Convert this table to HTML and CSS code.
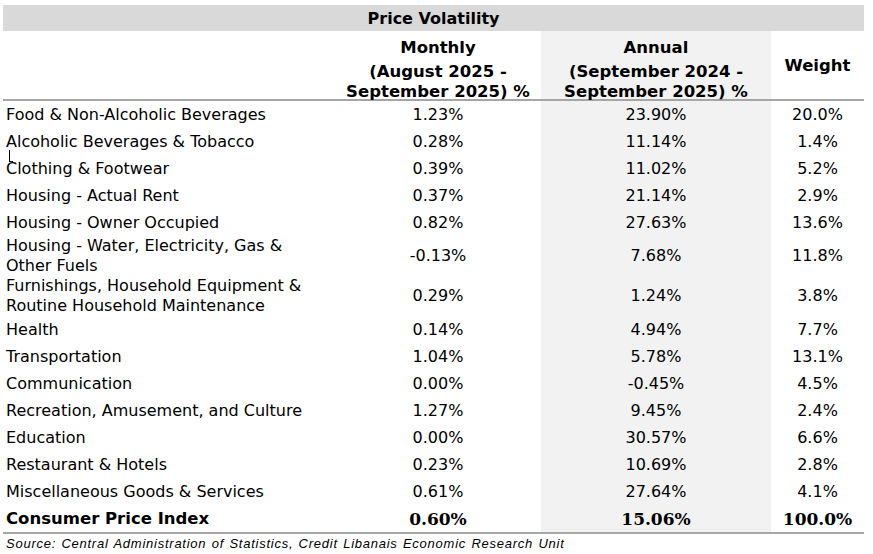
FILE: index.html
```html
<!DOCTYPE html>
<html>
<head>
<meta charset="utf-8">
<link rel="stylesheet" href="styles.css">
</head>
<body>
<div class="wrap">
<table class="vol">
  <colgroup>
    <col class="c-label"><col class="c-month"><col class="c-annual"><col class="c-weight">
  </colgroup>
  <thead>
    <tr class="title-row"><th colspan="4">Price Volatility</th></tr>
    <tr class="head-row">
      <th></th>
      <th class="hcell"><span class="h1">Monthly</span><span class="h2">(August 2025 -</span><span class="h3">September 2025) %</span></th>
      <th class="hcell annual"><span class="h1">Annual</span><span class="h2">(September 2024 -</span><span class="h3">September 2025) %</span></th>
      <th class="hweight">Weight</th>
    </tr>
  </thead>
  <tbody>
    <tr><td>Food &amp; Non-Alcoholic Beverages</td><td>1.23%</td><td class="annual">23.90%</td><td>20.0%</td></tr>
    <tr><td>Alcoholic Beverages &amp; Tobacco</td><td>0.28%</td><td class="annual">11.14%</td><td>1.4%</td></tr>
    <tr><td class="cursor-cell"><span class="caret"></span>Clothing &amp; Footwear</td><td>0.39%</td><td class="annual">11.02%</td><td>5.2%</td></tr>
    <tr><td>Housing - Actual Rent</td><td>0.37%</td><td class="annual">21.14%</td><td>2.9%</td></tr>
    <tr><td>Housing - Owner Occupied</td><td>0.82%</td><td class="annual">27.63%</td><td>13.6%</td></tr>
    <tr class="two"><td>Housing - Water, Electricity, Gas &amp;<br>Other Fuels</td><td>-0.13%</td><td class="annual">7.68%</td><td>11.8%</td></tr>
    <tr class="two"><td>Furnishings, Household Equipment &amp;<br>Routine Household Maintenance</td><td>0.29%</td><td class="annual">1.24%</td><td>3.8%</td></tr>
    <tr><td>Health</td><td>0.14%</td><td class="annual">4.94%</td><td>7.7%</td></tr>
    <tr><td>Transportation</td><td>1.04%</td><td class="annual">5.78%</td><td>13.1%</td></tr>
    <tr><td>Communication</td><td>0.00%</td><td class="annual">-0.45%</td><td>4.5%</td></tr>
    <tr><td>Recreation, Amusement, and Culture</td><td>1.27%</td><td class="annual">9.45%</td><td>2.4%</td></tr>
    <tr><td>Education</td><td>0.00%</td><td class="annual">30.57%</td><td>6.6%</td></tr>
    <tr><td>Restaurant &amp; Hotels</td><td>0.23%</td><td class="annual">10.69%</td><td>2.8%</td></tr>
    <tr><td>Miscellaneous Goods &amp; Services</td><td>0.61%</td><td class="annual">27.64%</td><td>4.1%</td></tr>
    <tr class="total"><td>Consumer Price Index</td><td class="num-bold">0.60%</td><td class="annual num-bold">15.06%</td><td class="num-bold">100.0%</td></tr>
  </tbody>
</table>
<p class="source">Source:  Central Administration of Statistics, Credit Libanais Economic Research Unit</p>
</div>
</body>
</html>
```

FILE: styles.css
```css
html, body {
  margin: 0;
  padding: 0;
  background: #ffffff;
}

.wrap {
  padding: 5px 0 0 3px;
}

.vol {
  border-collapse: collapse;
  table-layout: fixed;
  width: 861px;
  font-family: "DejaVu Sans", Verdana, sans-serif;
  font-size: 16px;
  color: #000000;
}

.c-label { width: 332px; }
.c-month { width: 206px; }
.c-annual { width: 230px; }
.c-weight { width: 93px; }

.title-row th {
  background: #d9d9d9;
  height: 26px;
  padding: 0;
  font-size: 16px;
  font-weight: bold;
  text-align: center;
  vertical-align: middle;
}

.head-row th {
  height: 68px;
  padding: 0;
  font-size: 16.5px;
  font-weight: bold;
  border-bottom: 2px solid #a6a6a6;
  vertical-align: middle;
}

.head-row th.hcell {
  vertical-align: bottom;
}

.hcell span {
  display: block;
  line-height: 20px;
  text-align: center;
  white-space: nowrap;
}

.hcell .h1 {
  margin-bottom: 4px;
}

.hcell .h2 {
  margin-bottom: 3px;
}

.hcell .h3 {
  line-height: 14px;
}

.hweight {
  text-align: center;
}

.annual {
  background: #f2f2f2;
}

.vol td {
  height: 27px;
  padding: 0;
  text-align: center;
  vertical-align: middle;
  white-space: nowrap;
  line-height: 20px;
}

.vol td:first-child {
  text-align: left;
  padding-left: 3px;
}

.vol tr.two td {
  height: 40px;
}

.total td {
  font-weight: bold;
  font-size: 16.5px;
  border-bottom: 2px solid #a6a6a6;
}

.total .num-bold {
  font-family: "DejaVu Serif", Georgia, serif;
  font-size: 17px;
}

.cursor-cell {
  position: relative;
}

.caret {
  position: absolute;
  left: 6px;
  top: -5px;
  width: 3px;
  height: 11px;
  border-left: 1px solid #000;
  border-bottom: 1px solid #000;
}

.source {
  margin: 2px 0 0 3px;
  font-family: "Liberation Sans", Arial, sans-serif;
  font-style: italic;
  font-size: 13px;
  letter-spacing: 0.75px;
  word-spacing: 1px;
}
```
